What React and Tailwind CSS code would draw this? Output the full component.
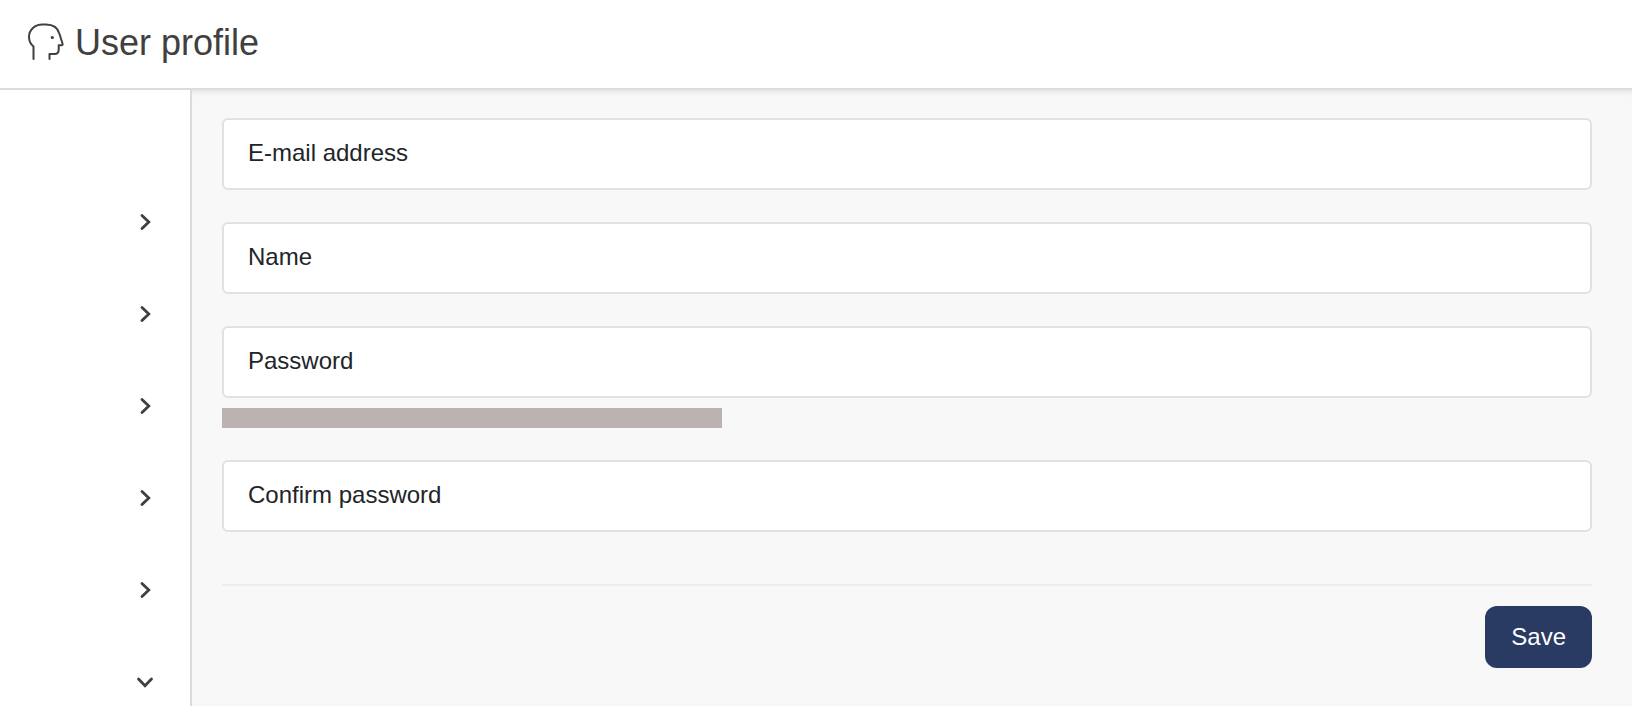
import { useState } from 'react';

const fields = [
  { id: 'email', label: 'E-mail address', type: 'email' },
  { id: 'name', label: 'Name', type: 'text' },
  { id: 'password', label: 'Password', type: 'password', hint: true },
  { id: 'confirm', label: 'Confirm password', type: 'password' },
];

const sections = ['Section 1', 'Section 2', 'Section 3', 'Section 4', 'Section 5', 'Section 6'];

const HeadIcon = () => (
  <svg
    viewBox="0 0 38 40"
    className="h-10 w-[38px]"
    fill="none"
    stroke="currentColor"
    strokeWidth="2"
    strokeLinecap="round"
    strokeLinejoin="round"
    aria-hidden="true"
  >
    <path d="M6.500 37V24.500C3.500 22 2 18.500 2 15C2 7.500 8 2.500 15.500 2.500H19C26 2.500 31 6 32.500 12L35.500 21.500C35.900 22.700 35.500 23.300 34.500 23.300H31.700V27.500C31.700 30.800 30 32 27.500 32H22.500V37" />
    <circle cx="25.300" cy="15.500" r="1.600" fill="currentColor" stroke="none" />
  </svg>
);

const Chevron = ({ open }) => (
  <svg
    viewBox="0 0 20 20"
    className={`size-5 ${open ? 'rotate-90' : ''}`}
    fill="none"
    stroke="currentColor"
    strokeWidth="2.800"
    strokeLinecap="round"
    aria-hidden="true"
  >
    <path d="M7 3.500L13.800 10L7 16.500" />
  </svg>
);

const Field = ({ id, label, type, hint, value, onChange }) => (
  <div>
    <div className="grid">
      <input
        id={id}
        type={type}
        value={value}
        onChange={(e) => onChange(id, e.target.value)}
        className="col-start-1 row-start-1 h-[72px] w-full rounded-md border-2 border-[#dee2e6] bg-white px-6 text-2xl text-[#212529] outline-none focus:border-[#2a3b63]"
      />
      <label
        htmlFor={id}
        className={`pointer-events-none col-start-1 row-start-1 self-center px-[26px] pb-0.5 text-2xl text-[#212529] ${value ? 'invisible' : ''}`}
      >
        {label}
      </label>
    </div>
    {hint && <div className="mt-2.5 h-5 w-[500px] max-w-full bg-[#bcb2b1]" />}
  </div>
);

const App = () => {
  const [values, setValues] = useState({ email: '', name: '', password: '', confirm: '' });
  const [openSection, setOpenSection] = useState(5);

  const handleChange = (id, value) => {
    setValues((prev) => ({ ...prev, [id]: value }));
  };

  return (
    <div className="flex min-h-screen flex-col bg-white font-['Liberation_Sans',Arial,sans-serif] text-[#404040]">
      {/* Header */}
      <header className="flex h-22 items-center gap-[10px] px-[27px] pb-1">
        <HeadIcon />
        <h1 className="pt-0.5 text-4xl">User profile</h1>
      </header>
      <div className="flex grow">
        {/* Sidebar */}
        <nav className="flex w-48 shrink-0 flex-col items-end gap-13 border-t-2 border-r-2 border-[#d9dde1] pt-28 pr-[25px]">
          {sections.map((name, index) => (
            <button
              key={name}
              type="button"
              aria-label={name}
              aria-expanded={openSection === index}
              onClick={() => setOpenSection(openSection === index ? null : index)}
              className="flex size-10 items-center justify-center"
            >
              <Chevron open={openSection === index} />
            </button>
          ))}
        </nav>
        {/* Profile form */}
        <main className="grow bg-[#f8f8f8] px-10 pt-[30px] pl-[30px] shadow-[inset_0_8px_8px_-8px_rgba(0,0,0,0.25)]">
          <form onSubmit={(e) => e.preventDefault()}>
            <div className="flex flex-col gap-8">
              {fields.map((field) => (
                <Field key={field.id} {...field} value={values[field.id]} onChange={handleChange} />
              ))}
            </div>
            <hr className="mt-13 border-t-2 border-[#ededed]" />
            <div className="mt-5 flex justify-end">
              <button type="submit" className="rounded-xl bg-[#2a3b63] px-[26px] py-[15px] text-2xl text-white">
                Save
              </button>
            </div>
          </form>
        </main>
      </div>
    </div>
  );
};

export default App;
